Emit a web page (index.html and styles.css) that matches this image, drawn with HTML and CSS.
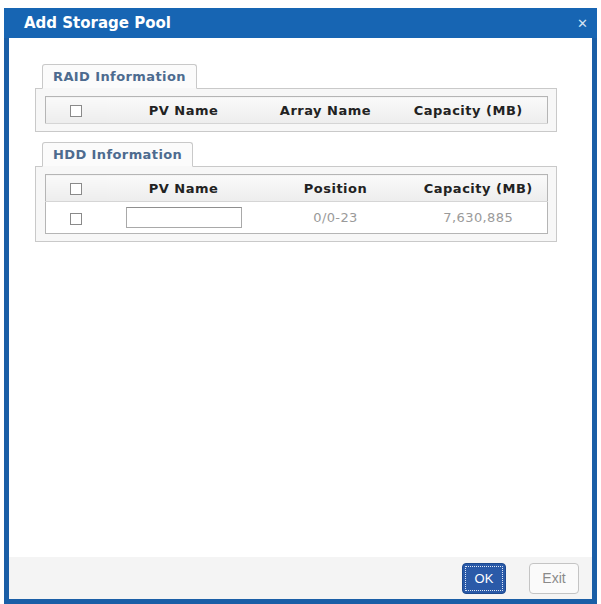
FILE: index.html
```html
<!DOCTYPE html>
<html lang="en">
<head>
    <meta charset="UTF-8">
    <meta name="viewport" content="width=device-width, initial-scale=1.0">
    <title>Add Storage Pool</title>
    <link rel="stylesheet" href="styles.css">
</head>
<body>
<div class="dialog">
    <div class="title-bar">
        <span class="title">Add Storage Pool</span>
        <span class="close">&#x2715;</span>
    </div>
    <div class="dialog-body">
        <div class="group">
            <div class="tab">RAID Information</div>
            <div class="panel">
                <table class="grid">
                    <colgroup>
                        <col style="width: 60px">
                        <col style="width: 156px">
                        <col style="width: 128px">
                        <col>
                    </colgroup>
                    <tr class="head">
                        <th><span class="check"></span></th>
                        <th>PV Name</th>
                        <th>Array Name</th>
                        <th>Capacity (MB)</th>
                    </tr>
                </table>
            </div>
        </div>
        <div class="group">
            <div class="tab">HDD Information</div>
            <div class="panel">
                <table class="grid">
                    <colgroup>
                        <col style="width: 60px">
                        <col style="width: 156px">
                        <col style="width: 148px">
                        <col>
                    </colgroup>
                    <tr class="head">
                        <th><span class="check"></span></th>
                        <th>PV Name</th>
                        <th>Position</th>
                        <th>Capacity (MB)</th>
                    </tr>
                    <tr class="row">
                        <td><span class="check"></span></td>
                        <td><input class="pv-input" type="text"></td>
                        <td>0/0-23</td>
                        <td>7,630,885</td>
                    </tr>
                </table>
            </div>
        </div>
    </div>
    <div class="footer">
        <button class="btn btn-ok">OK</button>
        <button class="btn btn-exit">Exit</button>
    </div>
</div>
</body>
</html>
```

FILE: styles.css
```css
body {
    margin: 0;
    background-color: #fff;
    font-family: "DejaVu Sans", Verdana, sans-serif;
}

.dialog {
    width: 583px;
    height: 591px;
    margin: 8px 0 0 4px;
    border: 5px solid #1a5ea6;
    border-top: none;
    display: flex;
    flex-direction: column;
    background-color: #fff;
}

.title-bar {
    height: 30px;
    margin: 0 -5px;
    padding: 0 9px 0 20px;
    background-color: #1765b3;
    display: flex;
    align-items: center;
    justify-content: space-between;
}

.title {
    color: #fff;
    font-weight: bold;
    font-size: 15px;
}

.close {
    color: #d4e2f2;
    font-size: 13px;
    font-weight: bold;
}

.dialog-body {
    flex: 1;
    padding: 26px 35px 0 26px;
}

.group {
    margin-bottom: 10px;
}

.tab {
    display: inline-block;
    margin-left: 7px;
    margin-bottom: -1px;
    height: 23px;
    line-height: 24px;
    padding: 0 10px;
    border: 1px solid #c9c9c9;
    border-bottom: 1px solid #f7f7f7;
    border-radius: 3px 3px 0 0;
    background-color: #fbfbfb;
    color: #4d6b8f;
    font-weight: bold;
    font-size: 13px;
    letter-spacing: 0.4px;
    position: relative;
}

.panel {
    border: 1px solid #c9c9c9;
    background-color: #f7f7f7;
    padding: 7px 8px 7px 9px;
}

.grid {
    width: 100%;
    table-layout: fixed;
    border-collapse: collapse;
    border: 1px solid #b5b5b5;
    background-color: #fff;
    font-size: 13px;
}

.grid th {
    height: 26px;
    padding: 0;
    font-weight: bold;
    color: #222;
    text-align: center;
    background: linear-gradient(#fafafa, #ededed);
    border-bottom: 1px solid #d5d5d5;
    letter-spacing: 0.5px;
}

.grid td {
    height: 31px;
    padding: 0;
    text-align: center;
    color: #9a9a9a;
    letter-spacing: 0.4px;
}

.check {
    display: inline-block;
    width: 10px;
    height: 10px;
    border: 1px solid #8a8a8a;
    background-color: #fff;
    vertical-align: middle;
}

.pv-input {
    width: 114px;
    height: 19px;
    padding: 0;
    border: 1px solid #a9a9a9;
    border-top-color: #8f8f8f;
    vertical-align: middle;
}

.footer {
    height: 42px;
    background-color: #f4f4f4;
    display: flex;
    justify-content: flex-end;
    align-items: center;
    gap: 23px;
    padding-right: 13px;
}

.btn {
    height: 31px;
    border-radius: 4px;
    font-family: "Liberation Sans", Arial, sans-serif;
    font-size: 13px;
    padding: 0;
}

.btn-ok {
    width: 44px;
    background-color: #2a5aa8;
    color: #fff;
    border: 1px solid #1d4a90;
    outline: 1px dotted #dfe8f5;
    outline-offset: -4px;
}

.btn-exit {
    width: 50px;
    background-color: #fafafa;
    color: #8a8a8a;
    border: 1px solid #c4c4c4;
    font-family: "Liberation Sans Narrow", "Liberation Sans", Arial, sans-serif;
    font-size: 14px;
}
```
